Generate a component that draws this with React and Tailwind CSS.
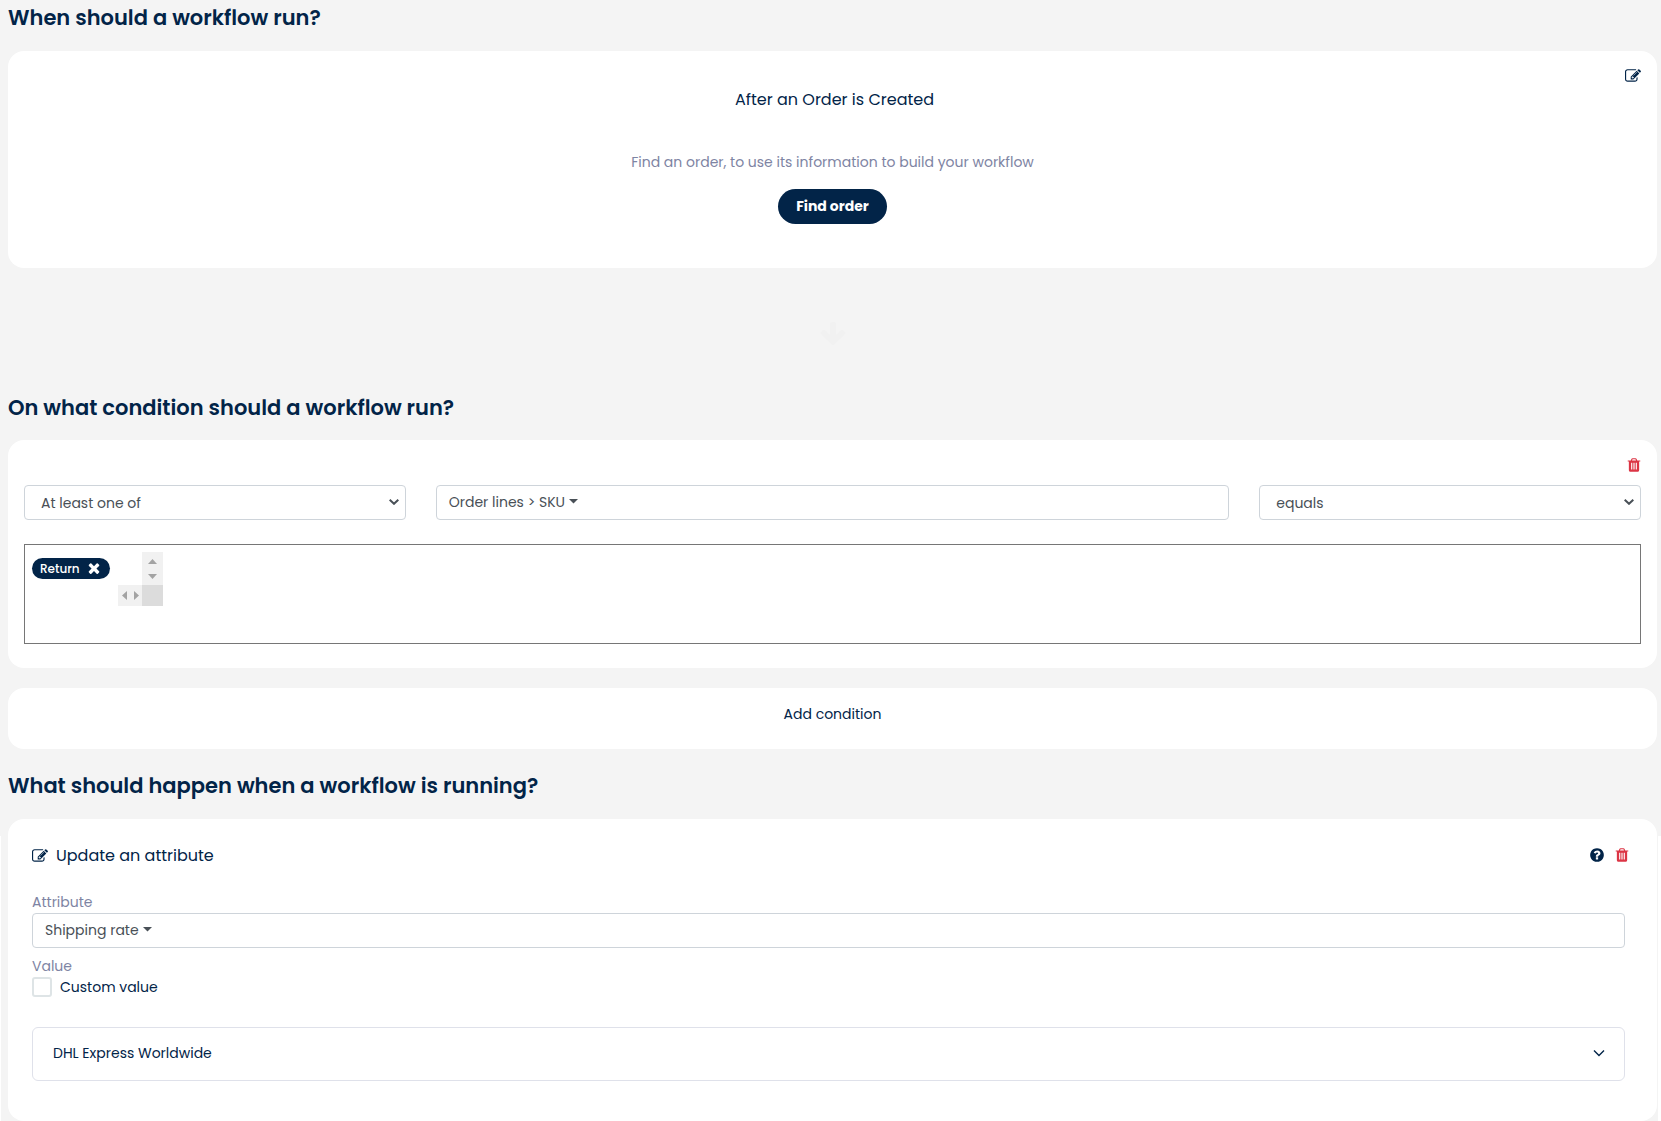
import React from "react";

const ICONS = {
  edit: "M888 1184l116-116-152-152-116 116v56h96v96h56zm440-720q-16-16-33 1l-350 350q-17 17-1 33t33-1l350-350q17-17 1-33zm80 594v190q0 119-84.5 203.5t-203.5 84.5h-832q-119 0-203.5-84.5t-84.5-203.5v-832q0-119 84.5-203.5t203.5-84.5h832q63 0 117 25 15 7 18 23 3 17-9 29l-49 49q-14 14-32 8-23-6-45-6h-832q-66 0-113 47t-47 113v832q0 66 47 113t113 47h832q66 0 113-47t47-113v-126q0-13 9-22l64-64q15-15 35-7t20 29zm-96-738l288 288-672 672h-288v-288zm444 132l-92 92-288-288 92-92q28-28 68-28t68 28l152 152q28 28 28 68t-28 68z",
  trash: "M704 1376v-704q0-14-9-23t-23-9h-64q-14 0-23 9t-9 23v704q0 14 9 23t23 9h64q14 0 23-9t9-23zm256 0v-704q0-14-9-23t-23-9h-64q-14 0-23 9t-9 23v704q0 14 9 23t23 9h64q14 0 23-9t9-23zm256 0v-704q0-14-9-23t-23-9h-64q-14 0-23 9t-9 23v704q0 14 9 23t23 9h64q14 0 23-9t9-23zm-544-992h448l-48-117q-7-9-17-11h-317q-10 2-17 11zm928 32v64q0 14-9 23t-23 9h-96v948q0 83-47 143.5t-113 60.5h-832q-66 0-113-58.5t-47-141.5v-952h-96q-14 0-23-9t-9-23v-64q0-14 9-23t23-9h309l70-167q15-37 54-63t79-26h320q40 0 79 26t54 63l70 167h309q14 0 23 9t9 23z",
  help: "M1024 1376v-192q0-14-9-23t-23-9h-192q-14 0-23 9t-9 23v192q0 14 9 23t23 9h192q14 0 23-9t9-23zm256-672q0-88-55.5-163t-138.5-116-170-41q-243 0-371 213-15 24 8 42l132 100q7 6 19 6 16 0 25-12 53-68 86-92 34-24 86-24 48 0 85.5 26t37.5 59q0 38-20 61t-68 45q-63 28-115.5 86.5t-52.5 125.5v36q0 14 9 23t23 9h192q14 0 23-9t9-23q0-19 21.5-49.5t54.5-49.5q32-18 49-28.5t46-35 44.5-48 28-60.5 12.5-81zm384 192q0 209-103 385.5t-279.5 279.5-385.5 103-385.5-103-279.5-279.5-103-385.5 103-385.5 279.5-279.5 385.5-103 385.5 103 279.5 279.5 103 385.5z",
  times: "M1490 1322q0 40-28 68l-136 136q-28 28-68 28t-68-28l-294-294-294 294q-28 28-68 28t-68-28l-136-136q-28-28-28-68t28-68l294-294-294-294q-28-28-28-68t28-68l136-136q28-28 68-28t68 28l294 294 294-294q28-28 68-28t68 28l136 136q28 28 28 68t-28 68l-294 294 294 294q28 28 28 68z",
  arrowDown: "M1675 832q0 53-37 90l-651 652q-39 37-91 37-53 0-90-37l-651-652q-38-36-38-90 0-53 38-91l74-75q39-37 91-37 53 0 90 37l294 294v-704q0-52 38-90t90-38h128q52 0 90 38t38 90v704l294-294q37-37 90-37 52 0 91 37l75 75q37 39 37 91z",
};

function Icon({ name, className }) {
  return (
    <svg viewBox="0 0 1792 1792" fill="currentColor" aria-hidden="true" className={className}>
      <path d={ICONS[name]} />
    </svg>
  );
}

function Heading({ children }) {
  return <h2 className="px-2 text-[21px] leading-8 font-semibold text-[#022448]">{children}</h2>;
}

function Caret() {
  return (
    <svg viewBox="0 0 9 5" className="ml-1 h-[5px] w-[9px] fill-[#495057]" aria-hidden="true">
      <path d="M0 0h9L4.5 4.5z" />
    </svg>
  );
}

function DropdownField({ id, label, children }) {
  return (
    <button
      id={id}
      type="button"
      aria-label={label}
      className="flex h-[35px] w-full items-center rounded border border-[#ced4da] bg-white px-3 pb-[2px] text-left text-[#495057]"
    >
      {children}
      <Caret />
    </button>
  );
}

function SelectField({ label, options }) {
  return (
    <div className="relative">
      <select
        aria-label={label}
        className="h-[35px] w-full appearance-none rounded border border-[#ced4da] bg-white px-4 text-[#495057]"
      >
        {options.map((option) => (
          <option key={option}>{option}</option>
        ))}
      </select>
      <svg
        viewBox="0 0 10 6"
        className="pointer-events-none absolute top-[14px] right-[7px] h-[6px] w-[10px] fill-none stroke-[#495057] stroke-2"
        aria-hidden="true"
      >
        <path d="M0.7 0.8L5 4.8L9.3 0.8" />
      </svg>
    </div>
  );
}

function ScrollBox() {
  return (
    <div className="grid grid-cols-[24px_21px] grid-rows-[33px_21px]" aria-hidden="true">
      <div />
      <div className="flex flex-col items-center justify-between bg-[#f1f1f1] pt-[7px] pb-[6px]">
        <svg viewBox="0 0 9 5" className="h-[5px] w-[9px] fill-[#a3a3a3]"><path d="M0 5h9L4.5 0z" /></svg>
        <svg viewBox="0 0 9 5" className="h-[5px] w-[9px] fill-[#a3a3a3]"><path d="M0 0h9L4.5 5z" /></svg>
      </div>
      <div className="flex items-center justify-between bg-[#f1f1f1] pr-[3px] pl-1">
        <svg viewBox="0 0 5 9" className="h-[9px] w-[5px] fill-[#a3a3a3]"><path d="M5 0v9L0 4.5z" /></svg>
        <svg viewBox="0 0 5 9" className="h-[9px] w-[5px] fill-[#a3a3a3]"><path d="M0 0v9L5 4.5z" /></svg>
      </div>
      <div className="bg-[#dcdcdc]" />
    </div>
  );
}

export default function App() {
  return (
    <main className="min-h-screen bg-[#f4f4f4] font-['Poppins','Inter',sans-serif] text-sm leading-5 text-[#022448]">
      <section className="pt-[2px]">
        <Heading>When should a workflow run?</Heading>
        <div className="relative mt-[17px] mr-1 ml-2 flex flex-col items-center rounded-2xl bg-white pt-[37px] pb-11">
          <button type="button" aria-label="Edit trigger" className="absolute top-[17px] right-4">
            <Icon name="edit" className="size-4" />
          </button>
          <h3 className="pl-1 text-base leading-6">After an Order is Created</h3>
          <p className="mt-10 text-[#7e84a3]">Find an order, to use its information to build your workflow</p>
          <button type="button" className="mt-[17px] h-[35px] rounded-full bg-[#022448] px-[18px] pb-px font-bold text-white">
            Find order
          </button>
        </div>
      </section>

      <div className="flex h-[124px] items-center justify-center pt-2 pl-1">
        <Icon name="arrowDown" className="size-7 text-[#f1f1f1]" />
      </div>

      <section>
        <Heading>On what condition should a workflow run?</Heading>
        <div className="mt-4 mr-1 ml-2 rounded-2xl bg-white px-4 pt-[17px] pb-6">
          <div className="flex justify-end">
            <button type="button" aria-label="Delete condition">
              <Icon name="trash" className="-mr-px size-4 text-[#dc3545]" />
            </button>
          </div>
          <div className="mt-3 grid grid-cols-4 gap-[30px]">
            <SelectField label="Match" options={["At least one of", "All of", "None of"]} />
            <div className="col-span-2">
              <DropdownField label="Condition attribute">Order lines &gt; SKU</DropdownField>
            </div>
            <SelectField label="Operator" options={["equals", "does not equal"]} />
          </div>
          <div className="mt-6 flex h-[100px] items-start gap-2 border border-[#767676] p-[7px]">
            <span className="mt-[6px] flex h-[21px] items-center rounded-full bg-[#022448] px-2 text-xs font-medium text-white">
              Return
              <button type="button" aria-label="Remove Return" className="ml-[6px] pb-px">
                <Icon name="times" className="size-4" />
              </button>
            </span>
            <ScrollBox />
          </div>
        </div>
        <button type="button" className="mt-5 mr-1 ml-2 flex h-[61px] w-[calc(100%-12px)] justify-center rounded-2xl bg-white pt-4">
          Add condition
        </button>
      </section>

      <section className="pt-[21px]">
        <Heading>What should happen when a workflow is running?</Heading>
        <div className="relative mt-[17px] pr-1 pl-2 before:absolute before:top-[17px] before:bottom-0 before:left-0 before:w-px before:bg-white after:absolute after:top-[17px] after:right-0 after:bottom-0 after:w-[3px] after:bg-white">
          <div className="rounded-2xl bg-white pt-[25px] pr-8 pb-10 pl-6">
            <div className="flex items-center">
              <Icon name="edit" className="size-4" />
              <h3 className="ml-2 flex-1 text-base leading-6">Update an attribute</h3>
              <div className="-mr-[5px] flex gap-[9px] pb-[2px]">
                <button type="button" aria-label="Help">
                  <Icon name="help" className="size-4" />
                </button>
                <button type="button" aria-label="Delete action">
                  <Icon name="trash" className="size-4 text-[#dc3545]" />
                </button>
              </div>
            </div>
            <label htmlFor="attribute" className="mt-6 mb-px block text-[#7e84a3]">Attribute</label>
            <DropdownField id="attribute" label="Attribute">Shipping rate</DropdownField>
            <p className="mt-2 text-[#7e84a3]">Value</p>
            <label className="mt-px flex w-fit items-center gap-2">
              <input
                type="checkbox"
                className="size-5 appearance-none rounded-[3px] border-2 border-[#dee4e6] bg-white checked:bg-[#022448]"
              />
              Custom value
            </label>
            <button
              type="button"
              className="mt-[30px] flex h-[54px] w-full items-center justify-between rounded-md border border-[#dfe1ea] px-5 pb-[2px] text-left"
            >
              DHL Express Worldwide
              <svg viewBox="0 0 10 6" className="h-[6px] w-[10px] overflow-visible fill-none stroke-[#022448]" strokeWidth="1.4" aria-hidden="true">
                <path d="M0 0.5l5 5l5-5" />
              </svg>
            </button>
          </div>
        </div>
      </section>
    </main>
  );
}
